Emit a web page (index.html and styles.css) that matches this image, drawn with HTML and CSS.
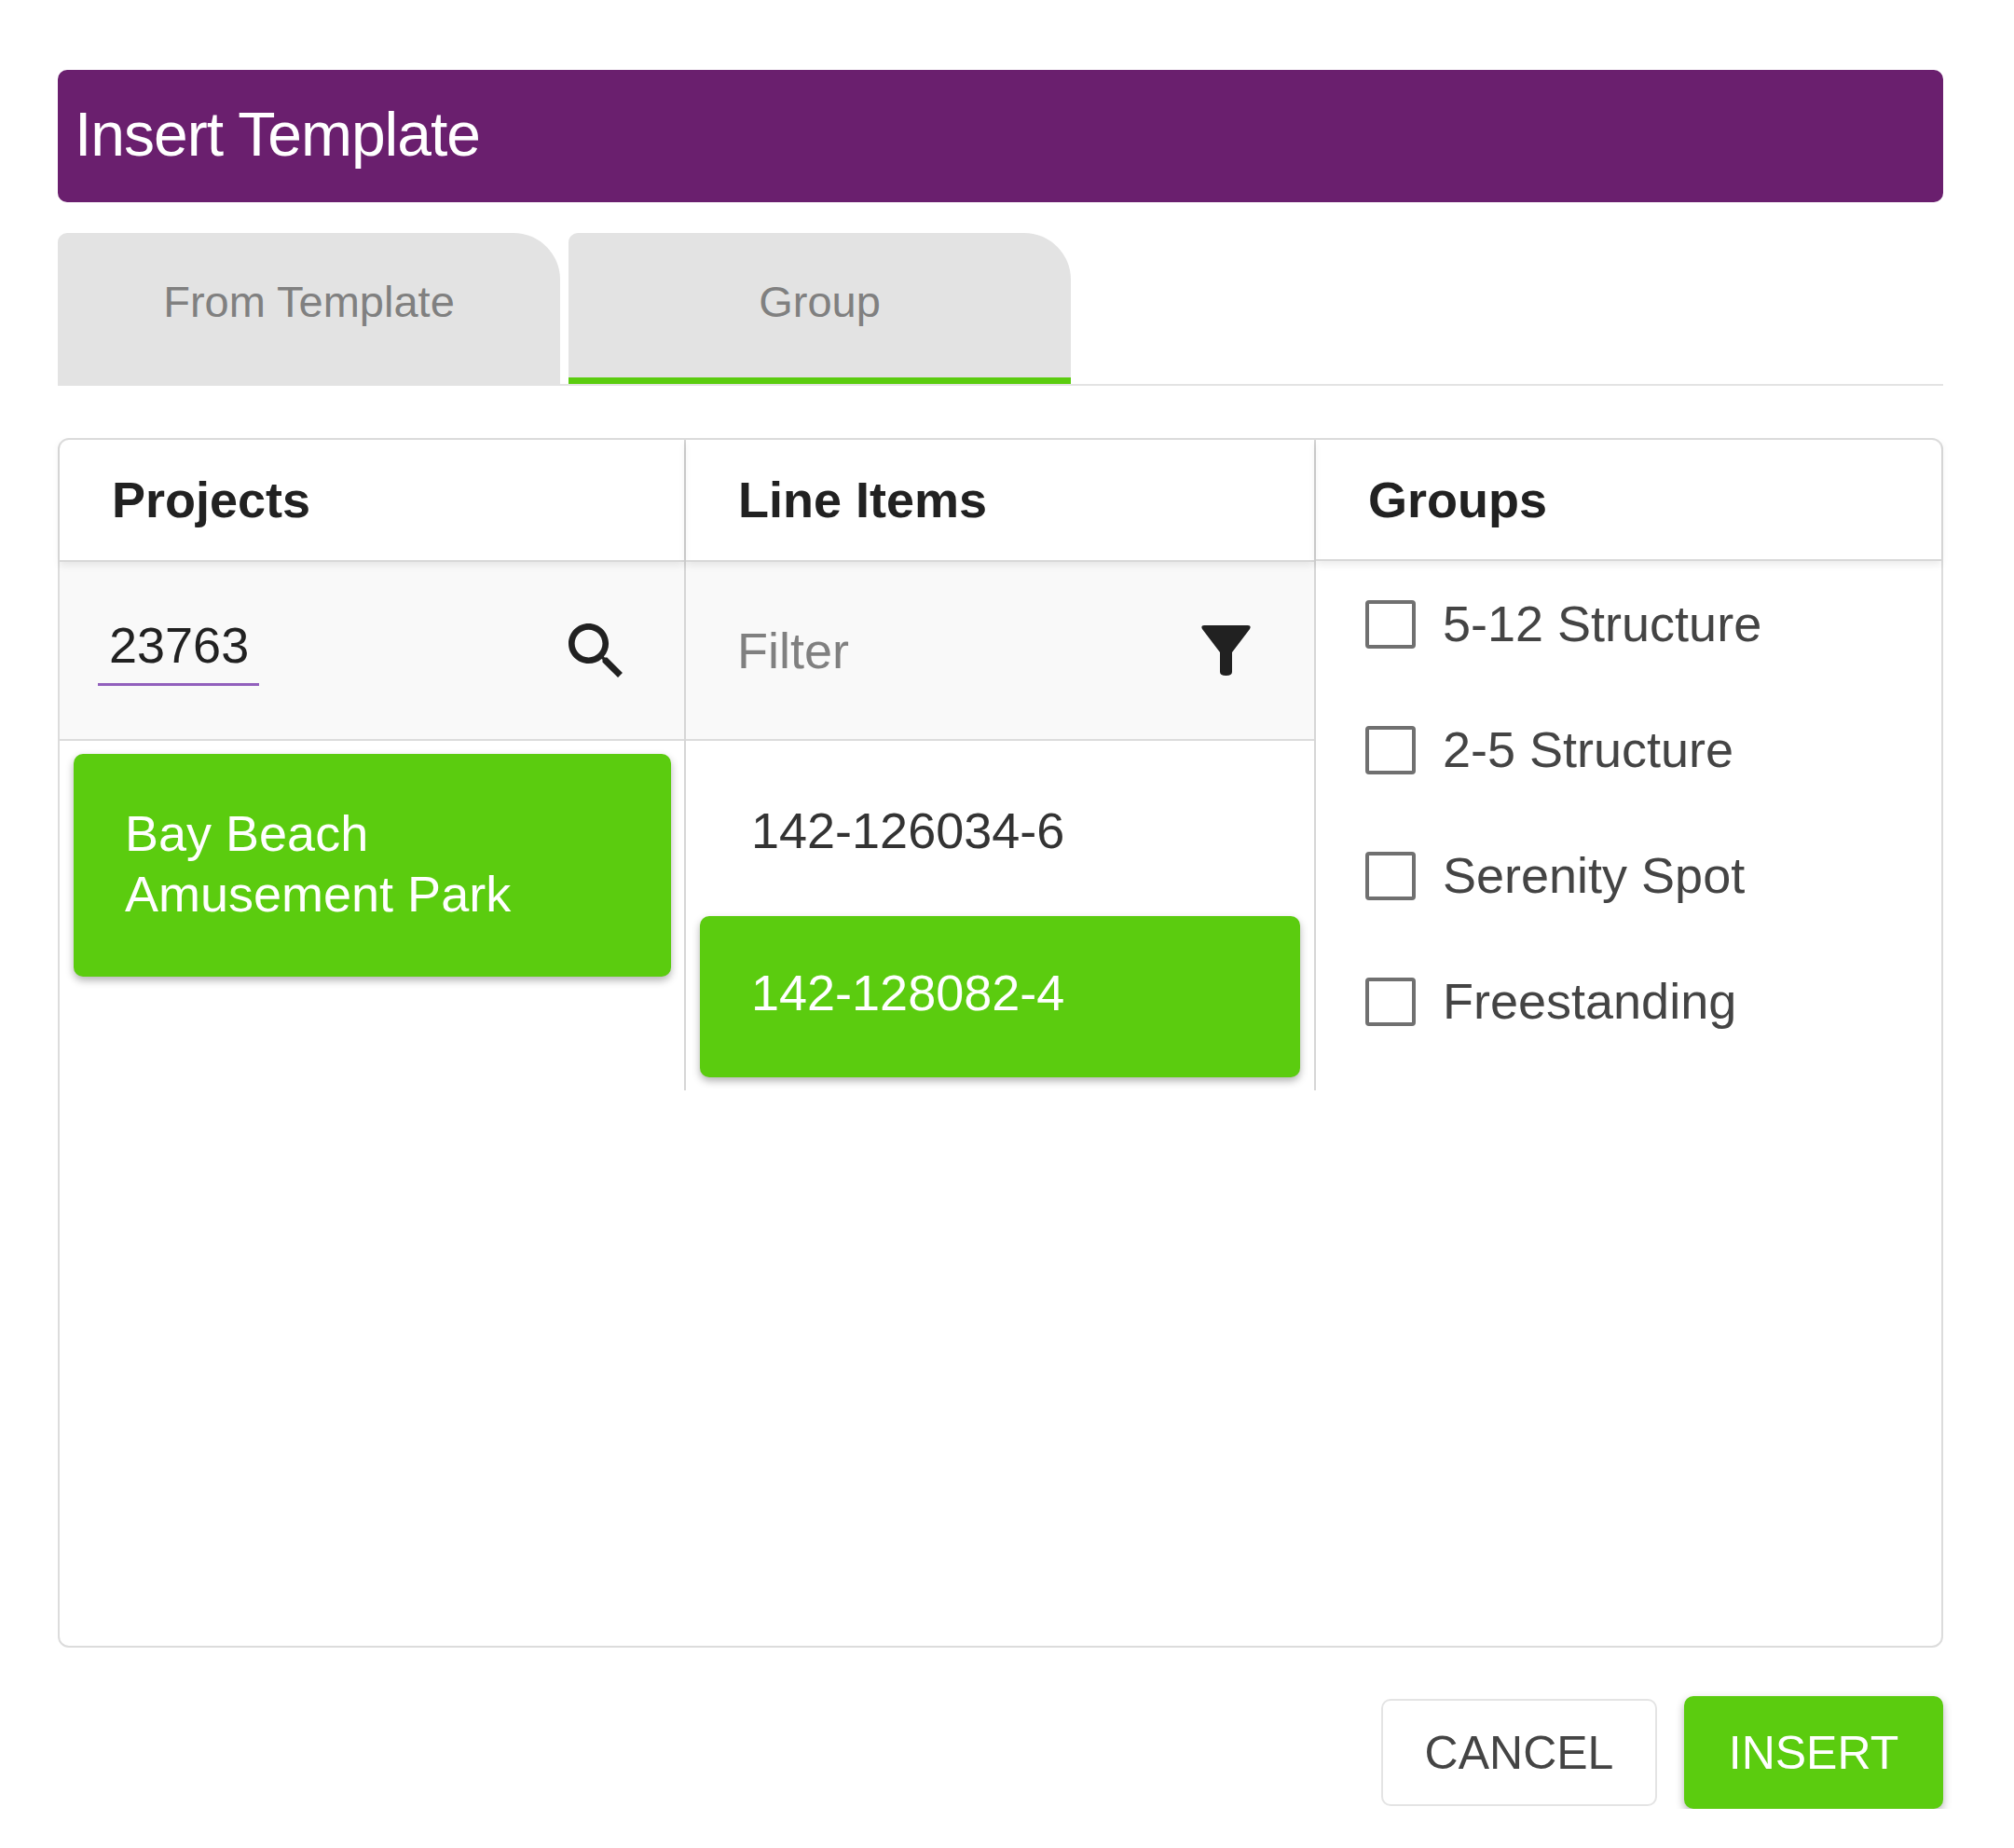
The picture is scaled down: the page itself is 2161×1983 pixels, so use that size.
FILE: index.html
```html
<!DOCTYPE html>
<html lang="en">
<head>
    <meta charset="UTF-8">
    <meta name="viewport" content="width=device-width, initial-scale=1.0">
    <title>Insert Template</title>
    <link rel="stylesheet" href="styles.css">
</head>
<body>
    <div class="dialog">
        <div class="title-bar">Insert Template</div>

        <div class="tabs">
            <div class="tab">From Template</div>
            <div class="tab tab-active">Group</div>
        </div>

        <div class="panel">
            <div class="col col-projects">
                <div class="col-head">Projects</div>
                <div class="col-tool">
                    <div class="field">23763</div>
                    <svg class="icon" viewBox="3 3 17.5 17.5" width="58" height="58">
                        <path d="M15.5 14h-.79l-.28-.27C15.41 12.59 16 11.11 16 9.5 16 5.91 13.09 3 9.5 3S3 5.91 3 9.5 5.91 16 9.5 16c1.61 0 3.09-.59 4.23-1.57l.27.28v.79l5 4.99L20.49 19l-4.99-5zm-6 0C7.01 14 5 11.99 5 9.5S7.01 5 9.5 5 14 7.01 14 9.5 11.99 14 9.5 14z"/>
                    </svg>
                </div>
                <div class="col-list">
                    <div class="item item-selected item-tall">Bay Beach<br>Amusement Park</div>
                </div>
            </div>

            <div class="col col-lines">
                <div class="col-head">Line Items</div>
                <div class="col-tool">
                    <div class="placeholder">Filter</div>
                    <svg class="icon" viewBox="0 0 53 54" width="53" height="54">
                        <path d="M3 0H50Q54 0 52 4L33 29V50Q33 54 26.5 54 20 54 20 50V29L1 4Q-1 0 3 0Z"/>
                    </svg>
                </div>
                <div class="col-list">
                    <div class="item">142-126034-6</div>
                    <div class="item item-selected">142-128082-4</div>
                </div>
            </div>

            <div class="col col-groups">
                <div class="col-head">Groups</div>
                <div class="check-list">
                    <label class="check"><span class="box"></span>5-12 Structure</label>
                    <label class="check"><span class="box"></span>2-5 Structure</label>
                    <label class="check"><span class="box"></span>Serenity Spot</label>
                    <label class="check"><span class="box"></span>Freestanding</label>
                </div>
            </div>
        </div>

        <div class="actions">
            <button class="btn btn-cancel">CANCEL</button>
            <button class="btn btn-insert">INSERT</button>
        </div>
    </div>
</body>
</html>
```

FILE: styles.css
```css
html, body {
    margin: 0;
    padding: 0;
    background-color: #fff;
}
body {
    font-family: "Liberation Sans", Arial, sans-serif;
    color: #212121;
}
.dialog {
    width: 2023px;
    margin-left: 62px;
    padding-top: 75px;
}
.title-bar {
    height: 142px;
    line-height: 138px;
    padding-left: 18px;
    box-sizing: border-box;
    background-color: #6a1f6e;
    color: #fff;
    border-radius: 10px;
    font-size: 66px;
    letter-spacing: -1px;
}
.tabs {
    display: flex;
    gap: 9px;
    margin-top: 33px;
    height: 164px;
    box-sizing: border-box;
    border-bottom: 2px solid #e3e3e3;
}
.tab {
    width: 539px;
    height: 163px;
    padding-top: 46px;
    box-sizing: border-box;
    background-color: #e3e3e3;
    border-radius: 10px 50px 0 0;
    color: #808080;
    font-size: 47px;
    text-align: center;
}
.tab-active {
    height: 162px;
    border-bottom: 7px solid #5bcc0f;
}
.panel {
    display: flex;
    height: 1298px;
    margin-top: 56px;
    box-sizing: border-box;
    border: 2px solid #dcdcdc;
    border-radius: 12px;
}
.col {
    display: flex;
    flex-direction: column;
    box-sizing: border-box;
    height: 698px;
    border-right: 2px solid #d6d6d6;
}
.col-projects {
    width: 672px;
}
.col-lines {
    width: 676px;
}
.col-groups {
    flex: 1;
    border-right: none;
}
.col-head {
    height: 131px;
    line-height: 128px;
    padding-left: 56px;
    box-sizing: border-box;
    border-bottom: 2px solid #d8d8d8;
    box-shadow: 0 4px 8px rgba(0, 0, 0, 0.08);
    font-size: 54px;
    font-weight: bold;
    position: relative;
}
.col-tool {
    display: flex;
    align-items: center;
    justify-content: space-between;
    height: 192px;
    padding: 0 66px 0 41px;
    box-sizing: border-box;
    background-color: #f9f9f9;
    border-bottom: 2px solid #dcdcdc;
}
.col-lines .col-tool {
    padding: 0 68px 0 55px;
}
.field {
    width: 173px;
    height: 76px;
    padding-left: 12px;
    box-sizing: border-box;
    border-bottom: 3px solid #9260bd;
    font-size: 54px;
    line-height: 64px;
    color: #212121;
}
.placeholder {
    font-size: 54px;
    color: #808080;
}
.icon {
    fill: #212121;
    display: block;
}
.col-list {
    display: flex;
    flex-direction: column;
    padding: 14px 14px 0 15px;
}
.col-lines .col-list {
    padding: 14px 15px 0 15px;
    gap: 0;
}
.item {
    height: 174px;
    padding: 50px 40px 0 40px;
    box-sizing: border-box;
    font-size: 54px;
    line-height: 65px;
    border-radius: 10px;
    color: #333;
    padding-left: 55px;
}
.item-selected {
    height: 173px;
    background-color: #5bcc0f;
    color: #fff;
    box-shadow: 0 4px 8px rgba(0, 0, 0, 0.3);
}
.item-tall {
    height: 239px;
    padding: 53px 40px 0 55px;
}
.check-list {
    display: flex;
    flex-direction: column;
    padding: 42px 0 0 53px;
}
.check {
    display: flex;
    align-items: center;
    gap: 29px;
    height: 135px;
    align-items: flex-start;
    font-size: 54px;
    line-height: 50px;
    color: #444;
}
.box {
    width: 54px;
    height: 52px;
    box-sizing: border-box;
    border: 4px solid #707070;
    border-radius: 4px;
    background-color: #fff;
}
.actions {
    display: flex;
    justify-content: flex-end;
    align-items: center;
    gap: 29px;
    margin-top: 52px;
}
.btn {
    font-family: "Liberation Sans", Arial, sans-serif;
    font-size: 50px;
    border-radius: 10px;
    box-sizing: border-box;
    cursor: pointer;
}
.btn-cancel {
    width: 296px;
    height: 115px;
    background-color: #fff;
    border: 2px solid #e4e4e4;
    color: #444;
}
.btn-insert {
    width: 278px;
    height: 121px;
    background-color: #5bcc0f;
    border: none;
    color: #fff;
    box-shadow: 0 4px 10px rgba(0, 0, 0, 0.3);
}
```
